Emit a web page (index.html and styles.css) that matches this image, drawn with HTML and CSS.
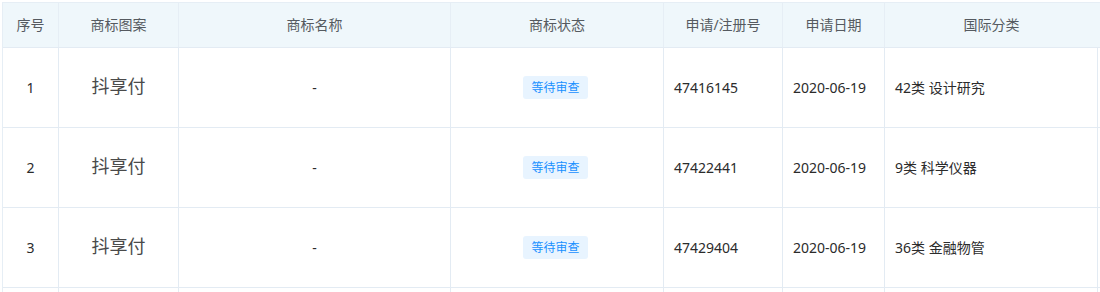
FILE: index.html
```html
<!DOCTYPE html>
<html lang="zh-CN">
<head>
<meta charset="utf-8">
<link rel="stylesheet" href="styles.css">
</head>
<body>
<div class="table">
  <div class="thead">
    <div class="th">序号</div>
    <div class="th">商标图案</div>
    <div class="th">商标名称</div>
    <div class="th">商标状态</div>
    <div class="th">申请/注册号</div>
    <div class="th">申请日期</div>
    <div class="th last">国际分类</div>
  </div>
  <div class="row">
    <div class="td center">1</div>
    <div class="td center"><span class="logo">抖享付</span></div>
    <div class="td center">-</div>
    <div class="td center"><span class="tag">等待审查</span></div>
    <div class="td">47416145</div>
    <div class="td">2020-06-19</div>
    <div class="td">42类 设计研究</div>
  </div>
  <div class="row">
    <div class="td center">2</div>
    <div class="td center"><span class="logo">抖享付</span></div>
    <div class="td center">-</div>
    <div class="td center"><span class="tag">等待审查</span></div>
    <div class="td">47422441</div>
    <div class="td">2020-06-19</div>
    <div class="td">9类 科学仪器</div>
  </div>
  <div class="row">
    <div class="td center">3</div>
    <div class="td center"><span class="logo">抖享付</span></div>
    <div class="td center">-</div>
    <div class="td center"><span class="tag">等待审查</span></div>
    <div class="td">47429404</div>
    <div class="td">2020-06-19</div>
    <div class="td">36类 金融物管</div>
  </div>
  <div class="row partial">
    <div class="td"></div>
    <div class="td"></div>
    <div class="td"></div>
    <div class="td"></div>
    <div class="td"></div>
    <div class="td"></div>
    <div class="td"></div>
  </div>
</div>
</body>
</html>
```
FILE: styles.css
```css
html, body {
  margin: 0;
  padding: 0;
  background: #ffffff;
  overflow: hidden;
}
body {
  font-family: "Noto Sans", "Noto Sans CJK SC", sans-serif;
  font-size: 14px;
  color: #333333;
}
.table {
  margin: 2px 0 0 2px;
  width: 1098px;
  border-top: 1px solid #e6eef5;
  border-left: 1px solid #e6eef5;
}
.thead {
  display: grid;
  grid-template-columns: 56px 120px 272px 213px 119px 102px 1fr;
  height: 45px;
  background: #eff7fb;
  border-bottom: 1px solid #e3ebf3;
  box-sizing: border-box;
}
.th {
  display: flex;
  align-items: center;
  justify-content: center;
  border-right: 1px solid #e6eef5;
  color: #555a60;
  line-height: 20px;
  box-sizing: border-box;
}
.th.last {
  border-right: none;
  padding-right: 3px;
}
.row {
  display: grid;
  grid-template-columns: 56px 120px 272px 213px 119px 102px 213px;
  height: 80px;
  border-bottom: 1px solid #e3ebf3;
  box-sizing: border-box;
}
.row.partial {
  height: 6px;
  border-bottom: none;
}
.td {
  display: flex;
  align-items: center;
  padding-left: 10px;
  border-right: 1px solid #e3ebf3;
  box-sizing: border-box;
  line-height: 20px;
  color: #2b2b2b;
}
.td.center {
  justify-content: center;
  padding-left: 0;
}
.logo {
  font-size: 18px;
  color: #4a4a4a;
  line-height: 24px;
  margin-top: -4px;
}
.tag {
  display: inline-block;
  background: #e8f4ff;
  color: #1890ff;
  font-size: 12px;
  line-height: 23px;
  padding: 0 8px;
  border-radius: 3px;
  margin-right: 3px;
}
```
